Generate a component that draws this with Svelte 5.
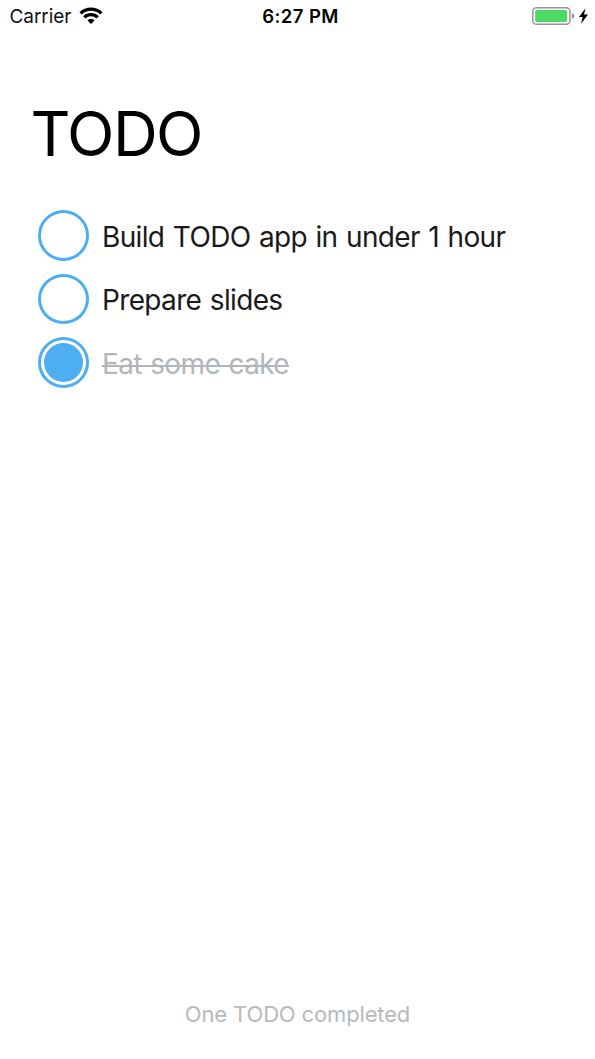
<script>
  const todos = [
    { text: 'Build TODO app in under 1 hour', done: false },
    { text: 'Prepare slides', done: false },
    { text: 'Eat some cake', done: true }
  ];
</script>

<main>
  <header>
    <div class="carrier">
      <span>Carrier</span>
      <svg width="24" height="18" viewBox="0 0 24 18" fill="none" stroke="#000" stroke-width="3.3">
        <path d="M1.6 6.4C7.4 .8 16.6 .8 22.4 6.4" />
        <path d="M5.3 10.4C9 6.8 15 6.8 18.7 10.4" />
        <path d="M12 17L8.3 13.3C10.4 11.5 13.6 11.5 15.7 13.3Z" fill="#000" stroke="none" />
      </svg>
    </div>
    <time>6:27 PM</time>
    <div class="power">
      <svg width="58" height="20" viewBox="0 0 58 20">
        <rect x="1.7" y="1.7" width="37.3" height="16.6" rx="3.8" fill="#fff" stroke="#98989a" stroke-width="1.5" />
        <rect x="4.2" y="4" width="31.8" height="12" rx="1.5" fill="#4cd964" />
        <path d="M40.8 7Q43.5 7.8 43.5 10T40.8 13Z" fill="#98989a" />
        <path d="M54.5 2.2L48 11H51.7L50 17.7L57 8.6H53Z" fill="#000" />
      </svg>
    </div>
  </header>
  <h1>TODO</h1>
  <ul>
    {#each todos as todo}
      <li class:done={todo.done}><span class="ring"></span><span class="text">{todo.text}</span></li>
    {/each}
  </ul>
  <footer>One TODO completed</footer>
</main>

<style>
  :global(body) { background: #fff; }
  main { font-family: Inter, sans-serif; height: 1059px; display: flex; flex-direction: column; color: #000; }
  header { height: 32px; display: grid; grid-template-columns: 1fr auto 1fr; align-items: center; font-size: 19px; padding: 0 6.5px 0 9.5px; flex: none; }
  .carrier { display: flex; align-items: center; gap: 8px; letter-spacing: -.05px; color: #111; }
  time { font-weight: 600; font-size: 18.5px; letter-spacing: .4px; padding-left: 3px; }
  .power { display: flex; justify-content: flex-end; }
  h1 { font-size: 62px; font-weight: 400; line-height: 76px; letter-spacing: -1.6px; margin: 64px 0 0 30.5px; }
  ul { list-style: none; margin: 31.5px 0 0; padding: 0 38px; flex: 1; }
  li { display: flex; align-items: center; gap: 13px; height: 63.5px; font-size: 28px; letter-spacing: -.65px; word-spacing: 1.25px; color: #1a1a1a; }
  .ring { width: 51px; height: 50.5px; box-sizing: border-box; border: 3px solid #4eaef2; border-radius: 50%; padding: 3.25px 3px 3px; background-clip: content-box; }
  .text { position: relative; padding-top: 2.5px; }
  .done { color: #b2b6ba; }
  .done .ring { background-color: #4eaef2; }
  .done .text::after { content: ''; position: absolute; left: 0; right: 0; top: 21px; height: 2px; background: #b2b6ba; }
  footer { text-align: center; font-size: 22px; line-height: 30px; letter-spacing: -.15px; height: 60px; color: #b5babe; }
</style>
